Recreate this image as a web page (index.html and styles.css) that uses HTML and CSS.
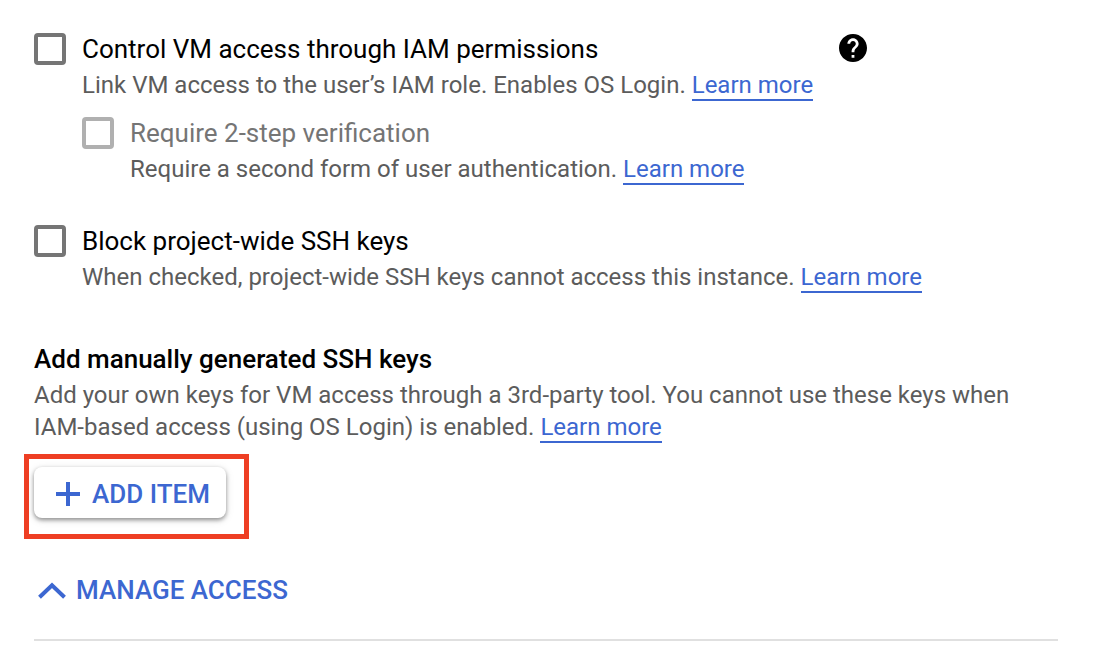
FILE: index.html
```html
<!DOCTYPE html>
<html lang="en">
<head>
<meta charset="utf-8">
<title>VM access</title>
<meta name="viewport" content="width=device-width, initial-scale=1">
<link rel="stylesheet" href="styles.css">
</head>
<body>
<main class="panel">
  <section class="group">
    <div class="option">
      <input class="check" type="checkbox" id="iam" aria-describedby="iam-desc">
      <div class="option-body">
        <div class="option-head">
          <label class="title" for="iam">Control VM access through IAM permissions</label>
          <button class="help" type="button" aria-label="Help">
            <svg class="help-icon" viewBox="2 2 20 20" aria-hidden="true"><path d="M12 2C6.48 2 2 6.48 2 12s4.480 10 10 10 10-4.480 10-10S17.520 2 12 2zm1 17h-2v-2h2v2zm2.070-7.750l-.9.920C13.450 12.900 13 13.500 13 15h-2v-.5c0-1.100.45-2.100 1.170-2.830l1.240-1.260c.37-.36.59-.86.59-1.410 0-1.100-.9-2-2-2s-2 .9-2 2H8c0-2.210 1.790-4 4-4s4 1.790 4 4c0 .88-.36 1.680-.93 2.250z"/></svg>
          </button>
        </div>
        <p class="desc" id="iam-desc">Link VM access to the user’s IAM role. Enables OS Login. <a class="link" href="#">Learn more</a></p>
        <div class="option nested">
          <input class="check" type="checkbox" id="two-step" aria-describedby="two-step-desc" disabled>
          <div class="option-body">
            <label class="title muted" for="two-step">Require 2-step verification</label>
            <p class="desc" id="two-step-desc">Require a second form of user authentication. <a class="link" href="#">Learn more</a></p>
          </div>
        </div>
      </div>
    </div>
  </section>

  <section class="group">
    <div class="option">
      <input class="check" type="checkbox" id="block" aria-describedby="block-desc">
      <div class="option-body">
        <label class="title" for="block">Block project-wide SSH keys</label>
        <p class="desc" id="block-desc">When checked, project-wide SSH keys cannot access this instance. <a class="link" href="#">Learn more</a></p>
      </div>
    </div>
  </section>

  <section class="keys">
    <h2 class="title heading">Add manually generated SSH keys</h2>
    <p class="desc">Add your own keys for VM access through a 3rd-party tool. You cannot use these keys when IAM-based access (using OS Login) is enabled. <a class="link" href="#">Learn more</a></p>
    <div class="highlight">
      <button class="add" type="button">
        <svg class="plus" viewBox="0 0 24 24" aria-hidden="true"><path d="M10 0h4v10h10v4H14v10h-4V14H0v-4h10z"/></svg>
        ADD ITEM
      </button>
    </div>
  </section>

  <button class="toggle" type="button" aria-expanded="true">
    <svg class="chevron" viewBox="0 0 28 18" aria-hidden="true"><path d="M1.500 16.300 14 4.200l12.500 12.100"/></svg>
    MANAGE ACCESS
  </button>
  <hr class="divider">
</main>
</body>
</html>
```
FILE: styles.css
```css
* {
  box-sizing: border-box;
}

body {
  margin: 0;
  background: #fff;
  color: #000;
  font-family: Roboto, "Liberation Sans", sans-serif;
  font-size: 24px;
  line-height: 32px;
}

.panel {
  padding: 29px 50px 0 34px;
}

.group {
  margin-bottom: 36px;
}

.group + .keys {
  margin-top: 46px;
}

.option {
  display: flex;
  gap: 16px;
}

.option-body {
  flex: 1;
  min-width: 0;
}

.nested {
  margin-top: 12px;
}

.check {
  appearance: none;
  flex: none;
  width: 32px;
  height: 32px;
  margin: 4px 0 0;
  border: 4px solid #757575;
  border-radius: 4px;
  background: #fff;
}

.check:checked {
  background: #3c67d1;
}

.check:disabled {
  border-color: #b0b0b0;
}

.option-head {
  display: flex;
  align-items: center;
  justify-content: space-between;
  max-width: 785px;
}

.title {
  display: block;
  margin: 0;
  font-size: 26px;
  font-weight: 400;
  line-height: 40px;
}

.muted {
  color: #757575;
}

.heading {
  font-weight: 500;
}

.help {
  display: flex;
  padding: 0 0 2px;
  border: 0;
  background: none;
}

.help-icon {
  width: 28px;
  height: 28px;
}

.desc {
  margin: 0;
  color: #5c5c5c;
}

.link {
  border-bottom: 2px solid #3c67d1;
  color: #3c67d1;
  text-decoration: none;
}

.highlight {
  width: fit-content;
  margin: 11px 0 0 -10px;
  padding: 8px 18px 16px 5px;
  border: 5px solid #ee3e23;
}

.add,
.toggle {
  display: flex;
  align-items: center;
  border: 0;
  background: #fff;
  color: #3c67d1;
  font: 500 26px/32px Roboto, "Liberation Sans", sans-serif;
}

.add {
  gap: 12px;
  height: 51px;
  padding: 2px 16px 0 22px;
  border-radius: 8px;
  box-shadow: 0 2px 4px rgba(0, 0, 0, 0.4), 0 2px 10px rgba(0, 0, 0, 0.1);
}

.plus {
  width: 24px;
  height: 24px;
  fill: currentColor;
}

.toggle {
  gap: 10px;
  margin-top: 35px;
  padding: 0 4px;
}

.chevron {
  width: 28px;
  height: 18px;
  fill: none;
  stroke: currentColor;
  stroke-width: 4;
}

.divider {
  height: 2px;
  margin: 33px 0 0;
  border: 0;
  background: #e0e0e0;
}
```
